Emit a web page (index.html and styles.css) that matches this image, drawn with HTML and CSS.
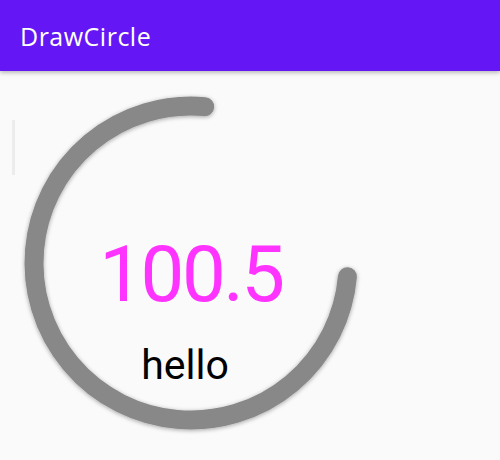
FILE: index.html
```html
<!DOCTYPE html>
<html>
<head>
<meta charset="utf-8">
<link rel="stylesheet" href="styles.css">
</head>
<body>
<header class="appbar"><h1 class="title">DrawCircle</h1></header>
<main class="content">
  <div class="scroll-hint"></div>
  <div class="stage">
    <svg class="ring" width="400" height="389" viewBox="0 0 400 389">
      <defs>
        <filter id="soft" x="-10%" y="-10%" width="120%" height="120%">
          <feDropShadow dx="0" dy="1" stdDeviation="2.2" flood-color="#000" flood-opacity="0.35"/>
        </filter>
      </defs>
      <path d="M347.4 205.7 A157 157 0 1 1 204.7 35.6" fill="none" stroke="#888888" stroke-width="19" stroke-linecap="round" filter="url(#soft)"/>
    </svg>
    <div class="labels">
      <div class="value">100.5</div>
      <div class="caption">hello</div>
    </div>
  </div>
</main>
</body>
</html>
```
FILE: styles.css
```css
html, body {
  margin: 0;
  padding: 0;
}
body {
  width: 500px;
  height: 460px;
  background: #fafafa;
  font-family: Roboto, "Noto Sans", sans-serif;
  overflow: hidden;
}
.appbar {
  height: 71px;
  background: #6516f5;
  display: flex;
  align-items: center;
  padding-left: 20px;
  box-shadow: 0 2px 4px rgba(0,0,0,0.25);
  position: relative;
  z-index: 1;
}
.title {
  margin: 0;
  color: #fff;
  font-family: "Open Sans", Roboto, sans-serif;
  font-size: 25px;
  font-weight: 400;
  letter-spacing: 0.5px;
}
.content {
  position: relative;
  height: 389px;
}
.scroll-hint {
  position: absolute;
  left: 12px;
  top: 49px;
  width: 3px;
  height: 55px;
  background: #ececec;
}
.stage {
  display: grid;
  width: 400px;
  height: 389px;
}
.ring, .labels {
  grid-area: 1 / 1;
}
.labels {
  display: flex;
  flex-direction: column;
  align-items: center;
  width: 382px;
  padding-top: 158px;
}
.value {
  color: #ff33ff;
  font-size: 78px;
  line-height: 92px;
  letter-spacing: -2.5px;
  margin-left: 0;
}
.caption {
  color: #000;
  font-size: 41px;
  line-height: 50px;
  margin-top: 19px;
  margin-left: -12px;
}
```
